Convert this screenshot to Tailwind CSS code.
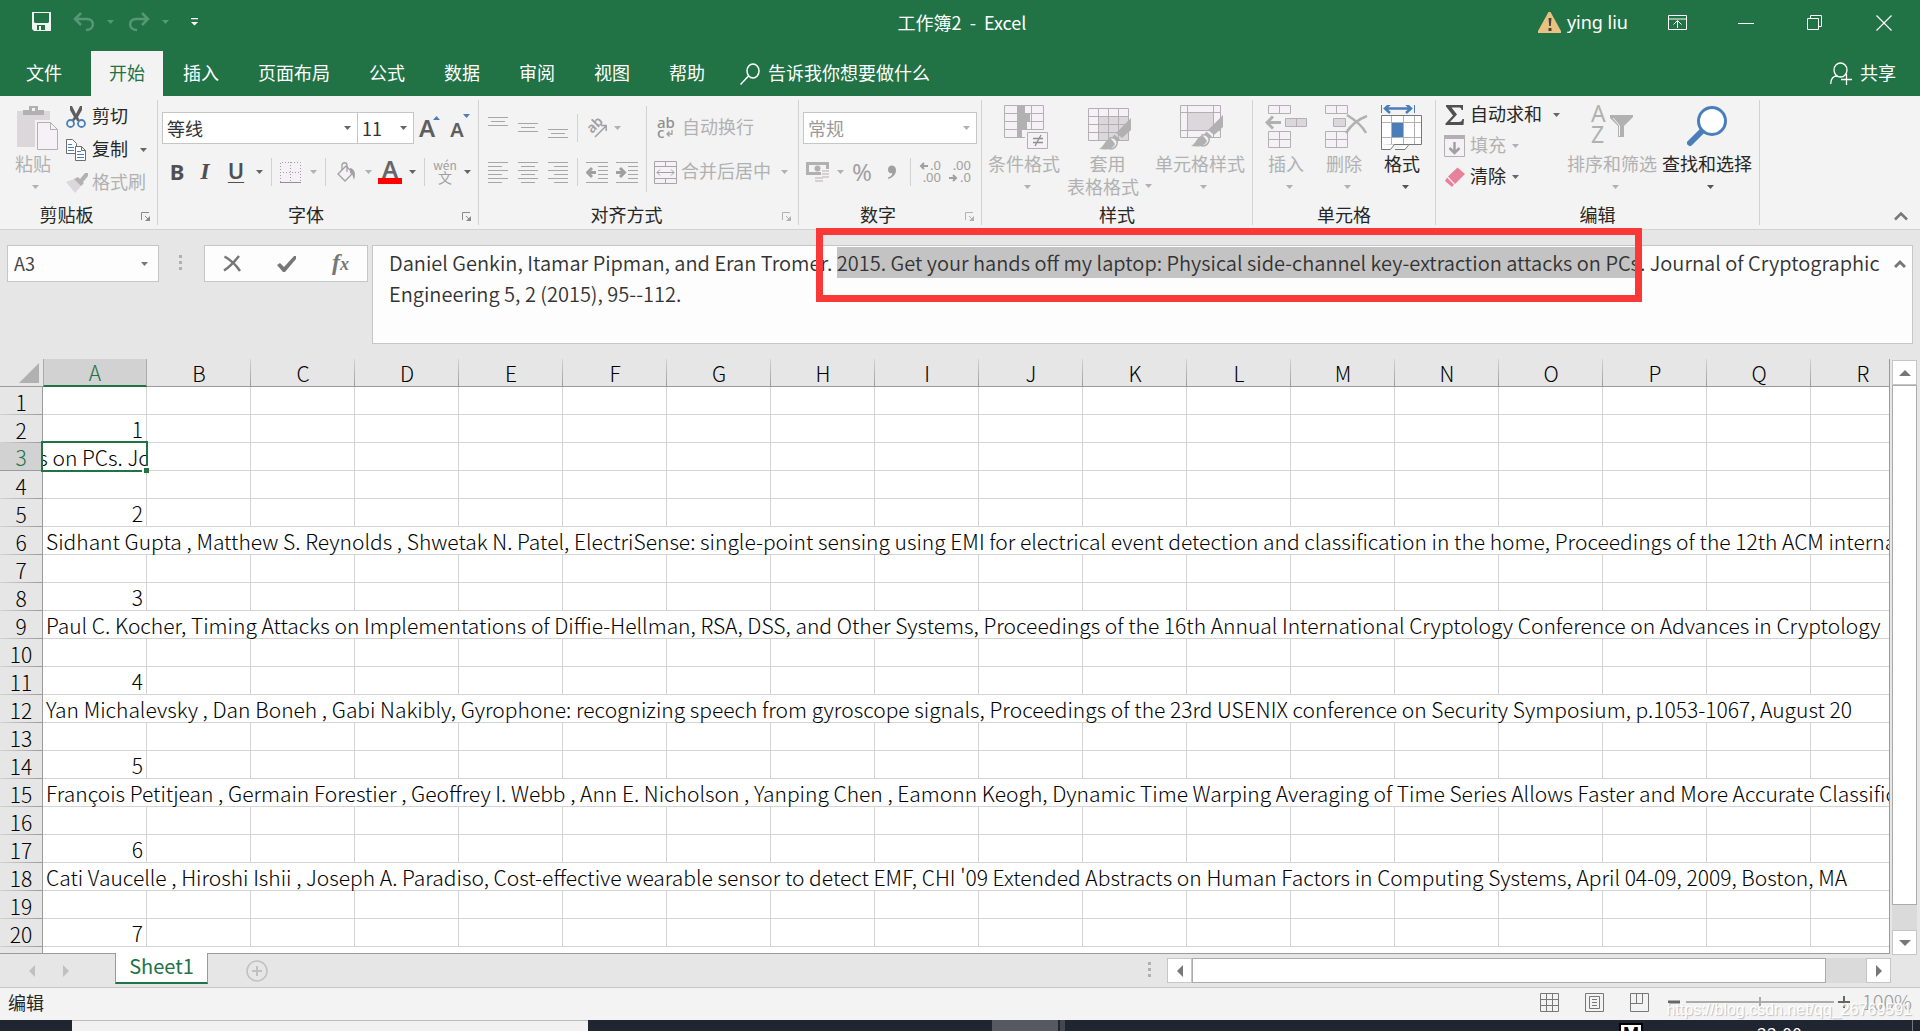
<!DOCTYPE html>
<html lang="zh-CN">
<head>
<meta charset="utf-8">
<meta name="viewport" content="width=device-width, initial-scale=1">
<title>工作簿2 - Excel</title>
<script src="https://cdn.jsdelivr.net/npm/@tailwindcss/browser@4"></script>
</head>
<body class="flex h-screen flex-col overflow-hidden bg-[#e6e6e6] font-['Noto_Sans_CJK_SC',sans-serif] text-lg leading-6 text-[#262626]">

<svg class="hidden">
  <symbol id="down" viewBox="0 0 7 4"><path fill="currentColor" d="M0 0h7L3.500 4z"/></symbol>
  <symbol id="launch" viewBox="0 0 9 9"><path fill="none" stroke="currentColor" d="M.5 8V.5H8M4 4l4 4"/><path fill="currentColor" d="M9 4v5H4z"/></symbol>
  <symbol id="brush" viewBox="0 0 33 33"><path fill="#b1b1b1" d="M32 1v12L23 21l-6-5zM15.500 17.500l5.500 5-3 2.500-5-4.500z"/><path fill="#f3f3f3" stroke="#b1b1b1" stroke-width="1.500" d="M11 21c4-1 8 2 7 6-1 3-4 5-7 5z"/><path fill="#b1b1b1" d="M0 32c5-2 6-10 11-10 2 0 3 2 5 5-3 6-9 6-16 5z"/></symbol>
</svg>

<!-- Title bar -->
<header class="flex h-[51px] shrink-0 items-center bg-[#217346] pb-3 text-white">
  <div class="flex flex-1 items-center pt-1 pl-8">
    <button aria-label="保存"><svg class="h-[19px] w-[19px]" viewBox="0 0 19 19"><path fill="#f3f3f3" fill-rule="evenodd" d="M0 0h19v19H2l-2-2zM2 1v9l1 1h13l1-1V1zM5 13v5h8v-5z"/><path fill="#f3f3f3" d="M7 14h2v4H7z"/></svg></button>
    <button aria-label="撤消" class="ml-[22px] flex items-center gap-3 text-[#579776]"><svg class="h-5 w-[22px]" viewBox="0 0 22 20"><path fill="none" stroke="currentColor" stroke-width="2.500" d="M8 1L2 7l6 6M2 7h12c8 0 8 11-1 11"/></svg><svg class="h-1 w-[7px]"><use href="#down"/></svg></button>
    <button aria-label="恢复" class="ml-3.5 flex items-center gap-3 text-[#579776]"><svg class="h-5 w-[22px]" viewBox="0 0 22 20"><path fill="none" stroke="currentColor" stroke-width="2.500" d="M14 1l6 6-6 6M20 7H8c-8 0-8 11 1 11"/></svg><svg class="h-1 w-[7px]"><use href="#down"/></svg></button>
    <button aria-label="自定义快速访问工具栏" class="ml-[22px]"><svg class="h-2 w-[7px]" viewBox="0 0 7 8"><path fill="#fff" d="M0 0h7v1.300H0zM0 4h7L3.500 7.500z"/></svg></button>
  </div>
  <h1 class="pt-1 text-center text-lg leading-6 whitespace-pre">工作簿2  -  Excel</h1>
  <div class="flex flex-1 items-center justify-end pt-1.5 pr-7">
    <button class="flex items-center gap-1.5 font-['Noto_Sans',sans-serif]"><svg class="h-[21px] w-[23px]" viewBox="0 0 23 21"><path fill="#e9c282" d="M10.500 0h2L23 19v2H0v-2z"/><path fill="#444" d="M10.500 6h3l-.7 8h-1.600zM10.500 16h3v3h-3z"/></svg><span class="pb-0.5">ying liu</span></button>
    <button aria-label="功能区显示选项" class="ml-10"><svg class="h-4 w-5" viewBox="0 0 20 16"><path fill="none" stroke="#fff" d="M.5.500h18v14H.5zM.5 4h18M9.500 13V6M5.500 9.500l4-4 4 4"/></svg></button>
    <button aria-label="最小化" class="ml-[50px]"><svg class="h-4 w-4"><path stroke="#fff" d="M0 8.500h16"/></svg></button>
    <button aria-label="还原" class="ml-[53px]"><svg class="h-4 w-4"><path fill="none" stroke="#fff" d="M.5 3.500h11v11H.5zM3.500 3V.500h11v11H12"/></svg></button>
    <button aria-label="关闭" class="ml-[53px]"><svg class="h-4 w-4"><path stroke="#fff" stroke-width="1.200" d="M.5.500l15 15M15.500.500l-15 15"/></svg></button>
  </div>
</header>

<!-- Ribbon tabs -->
<nav class="flex h-[45px] shrink-0 items-stretch gap-px bg-[#217346] pl-2 text-white">
  <button class="mr-2.5 px-[18px] pb-1">文件</button>
  <button class="bg-[#f3f3f3] px-[18px] pb-1 text-[#217346]">开始</button>
  <button class="px-[19px] pb-1">插入</button>
  <button class="px-[19px] pb-1">页面布局</button>
  <button class="px-[19px] pb-1">公式</button>
  <button class="px-[19px] pb-1">数据</button>
  <button class="px-[19px] pb-1">审阅</button>
  <button class="px-[19px] pb-1">视图</button>
  <button class="px-[19px] pb-1">帮助</button>
  <button class="flex items-center gap-2 pl-[15px]"><svg class="h-[22px] w-5" viewBox="0 0 20 22"><path fill="none" stroke="#fff" stroke-width="1.500" d="M8.500 13L.5 21.500M7 8a6 7 0 1 0 12 0a6 7 0 1 0-12 0z"/></svg><span class="pb-1">告诉我你想要做什么</span></button>
  <button class="ml-auto flex items-center gap-2 pr-6"><svg class="h-[23px] w-[22px]" viewBox="0 0 22 23"><path fill="none" stroke="#fff" stroke-width="1.300" d="M4 8a6.500 7 0 1 0 13 0a6.500 7 0 1 0-13 0zM.7 22c0-5 3-8 7-8.500M11 17.500h11M16.500 12v11"/></svg><span class="pb-1">共享</span></button>
</nav>

<!-- Ribbon -->
<section class="flex h-[134px] shrink-0 items-start border-b border-[#d2d2d2] bg-[#f3f3f3] pt-1">

  <!-- Clipboard -->
  <div class="flex h-[125px] w-[158px] shrink-0 flex-col border-r border-[#d2d2d2]">
    <div class="flex h-[102px] shrink-0">
      <button class="ml-1.5 flex w-[54px] flex-col items-center pt-[5px] text-[#b1b1b1]">
        <svg class="ml-2.5 h-[46px] w-[42px] shrink-0" viewBox="0 0 42 46"><path fill="#dcd7db" d="M0 6h33v36H0z"/><path fill="#b1b1b1" d="M6 5h6V1h9v4h6v5H6z"/><path fill="#f3f3f3" d="M15 3h3v3h-3zM18 15h24v31H18z"/><path fill="#f5f1f6" stroke="#b1b1b1" d="M20.500 17.500h13l7 7v20h-20zM33.500 17.500v7h7"/></svg>
        <span>粘贴</span>
        <svg class="mt-2.5 ml-1 h-1 w-[7px]"><use href="#down"/></svg>
      </button>
      <div class="ml-0.5 flex flex-col">
        <button class="flex h-[33px] items-center gap-1.5 pl-1"><svg class="h-[22px] w-5" viewBox="0 0 20 22"><path fill="#5e5e5e" d="M4 0l2 0 4 8 4-8h2v4l-4 7 2 4h-3l-1-2-2 2H5l3-4-4-7z"/><path fill="none" stroke="#4a7ebb" stroke-width="1.800" d="M1 17.500a3.500 3.500 0 1 0 7 0a3.500 3.500 0 1 0-7 0zM12 17.500a3.500 3.500 0 1 0 7 0a3.500 3.500 0 1 0-7 0z"/></svg><span class="pb-1">剪切</span></button>
        <button class="flex h-[33px] items-center gap-1.5 pl-1"><svg class="h-[22px] w-5" viewBox="0 0 20 22"><path fill="#fff" stroke="#6d6d6d" d="M.5.500h6l4 4v10H.5z"/><path stroke="#4a7ebb" d="M2 5.500h4M2 8.500h6M2 11.500h6"/><path fill="#fff" stroke="#6d6d6d" d="M9.500 7.500h6l4 4v10h-10zM15.500 7.500v4h4"/><path stroke="#4a7ebb" d="M11 12.500h4M11 15.500h7M11 18.500h7"/></svg><span class="pb-1">复制</span><svg class="ml-1.5 h-1 w-[7px] text-[#666]"><use href="#down"/></svg></button>
        <button class="flex h-[33px] items-center gap-1 pl-1 text-[#b1b1b1]"><svg class="h-5 w-[22px]" viewBox="0 0 22 20"><path fill="#dcd7db" d="M0 9l8-3 7 7-6 7z"/><path fill="#b1b1b1" d="M8 6l4-2 6 6-3 3zM14 6l5-6h3v3l-5 6z"/></svg><span class="pb-1">格式刷</span></button>
      </div>
    </div>
    <div class="flex items-center"><span class="flex-1 pr-2 text-center">剪贴板</span><button aria-label="剪贴板设置" class="mt-1 mr-[7px] text-[#8a8a8a]"><svg class="h-[9px] w-[9px]"><use href="#launch"/></svg></button></div>
  </div>

  <!-- Font -->
  <div class="flex h-[125px] w-[321px] shrink-0 flex-col border-r border-[#d2d2d2]">
    <div class="flex h-[102px] shrink-0 flex-col pt-3 pl-1">
      <div class="flex h-8 shrink-0 items-center">
        <div class="flex h-8 w-[196px] items-center border border-[#c6c6c6] bg-white pr-1.5 text-[#666]"><select aria-label="字体" class="flex-1 appearance-none bg-transparent pl-1 text-[#333] outline-none"><option>等线</option></select><svg class="h-1 w-[7px]"><use href="#down"/></svg></div>
        <div class="flex h-8 w-14 items-center border-y border-r border-[#c6c6c6] bg-white pr-1.5 text-[#666]"><select aria-label="字号" class="w-0 flex-1 appearance-none bg-transparent pl-1 text-[#333] outline-none"><option>11</option></select><svg class="h-1 w-[7px]"><use href="#down"/></svg></div>
        <button aria-label="增大字号" class="ml-[5px] flex items-start font-['Noto_Sans',sans-serif] text-2xl leading-6 font-semibold text-[#5e5e5e]">A<svg class="-ml-0.5 h-1 w-[7px]" viewBox="0 0 7 4"><path fill="#4a7ebb" d="M0 4h7L3.500 0z"/></svg></button>
        <button aria-label="减小字号" class="ml-2.5 flex items-start font-['Noto_Sans',sans-serif] text-xl leading-6 font-semibold text-[#5e5e5e]"><span class="pt-1">A</span><svg class="-ml-px h-1 w-[7px] text-[#4a7ebb]"><use href="#down"/></svg></button>
      </div>
      <div class="flex h-14 shrink-0 items-center font-['Noto_Sans',sans-serif] text-[22px] text-[#505050]">
        <button aria-label="加粗" class="w-[30px] pb-0.5 text-center font-bold">B</button>
        <button aria-label="倾斜" class="w-[26px] pb-0.5 text-center font-['Liberation_Serif',serif] text-2xl font-bold italic">I</button>
        <button aria-label="下划线" class="ml-1 flex w-7 justify-center pb-1 font-semibold underline decoration-1 underline-offset-3">U</button>
        <svg class="ml-1.5 h-1 w-[7px] text-[#666]"><use href="#down"/></svg>
        <i class="ml-2 h-7 w-px bg-[#d2d2d2]"></i>
        <button aria-label="边框" class="ml-2 flex items-center gap-[9px] text-[#b1b1b1]"><svg class="h-[21px] w-[21px]"><path fill="#f5f1f6" d="M0 0h21v21H0z"/><path fill="none" stroke="#a0a0a0" stroke-dasharray="1 2" d="M.5 20V.500h20V20M10.500 0v20M0 10.500h21"/><path stroke="#8f8f8f" d="M0 20.500h21"/></svg><svg class="h-1 w-[7px]"><use href="#down"/></svg></button>
        <i class="ml-2 h-7 w-px bg-[#d2d2d2]"></i>
        <button aria-label="填充颜色" class="ml-[11px] flex items-center gap-[9px] text-[#b1b1b1]"><svg class="h-[21px] w-[19px]" viewBox="0 0 19 21"><path fill="#f5f1f6" stroke="#a0a0a0" stroke-width="1.300" d="M1 12L9 4l7 7-8 8z"/><path fill="none" stroke="#a0a0a0" stroke-width="1.300" d="M5 8V3c0-3 5-3 5 0v7"/><path fill="#a0a0a0" d="M13 6c5 1 6 6 4 12-1-3-1-6-4-7z"/></svg><svg class="h-1 w-[7px]"><use href="#down"/></svg></button>
        <button aria-label="字体颜色" class="ml-1.5 flex w-6 flex-col items-center border-b-6 border-[#f00] text-2xl leading-[18px] font-semibold text-[#666]">A</button>
        <svg class="ml-[7px] h-1 w-[7px] text-[#666]"><use href="#down"/></svg>
        <i class="ml-2 h-7 w-px bg-[#d2d2d2]"></i>
        <button aria-label="拼音指南" class="ml-2 flex w-6 flex-col items-center font-['Noto_Sans_CJK_SC',sans-serif] text-[#a0a0a0]"><span class="text-xs leading-[10px]">wén</span><span class="text-sm leading-[14px]">文</span></button>
        <svg class="ml-[7px] h-1 w-[7px] text-[#666]"><use href="#down"/></svg>
      </div>
    </div>
    <div class="flex items-center"><span class="flex-1 pr-2 text-center">字体</span><button aria-label="字体设置" class="mt-1 mr-[7px] text-[#8a8a8a]"><svg class="h-[9px] w-[9px]"><use href="#launch"/></svg></button></div>
  </div>

  <!-- Alignment -->
  <div class="flex h-[125px] w-[320px] shrink-0 flex-col border-r border-[#d2d2d2]">
    <div class="flex h-[102px] shrink-0 pl-[9px] text-[#b1b1b1]">
      <div class="flex w-[158px] flex-col">
        <div class="mt-3 flex h-8 items-center">
          <button aria-label="顶端对齐"><svg class="h-[22px] w-5"><path stroke="#a6a6a6" d="M0 .500h20M3 4.500h14M0 8.500h20"/></svg></button>
          <button aria-label="垂直居中" class="ml-2.5"><svg class="h-[22px] w-5"><path stroke="#a6a6a6" d="M0 6.500h20M3 10.500h14M0 14.500h20"/></svg></button>
          <button aria-label="底端对齐" class="ml-2.5"><svg class="h-[22px] w-5"><path stroke="#a6a6a6" d="M0 12.500h20M3 16.500h14M0 20.500h20"/></svg></button>
          <i class="ml-[9px] h-7 w-px bg-[#d2d2d2]"></i>
          <button aria-label="方向" class="ml-[9px] flex items-center gap-[7px]"><svg class="h-5 w-5 overflow-visible" viewBox="0 0 20 20"><text transform="translate(5 16) rotate(-45)" font-family="Noto Sans" font-size="14" font-weight="600" fill="#a0a0a0">ab</text><path fill="none" stroke="#a0a0a0" stroke-width="1.500" d="M8 19L19 8M14 7.500h5.200V13"/></svg><svg class="h-1 w-[7px]"><use href="#down"/></svg></button>
        </div>
        <div class="mt-3 flex h-8 items-center">
          <button aria-label="左对齐"><svg class="h-[21px] w-5"><path stroke="#a6a6a6" d="M0 .500h20M0 4.500h14M0 8.500h20M0 12.500h14M0 16.500h20M0 20.500h14"/></svg></button>
          <button aria-label="居中" class="ml-2.5"><svg class="h-[21px] w-5"><path stroke="#a6a6a6" d="M0 .500h20M3 4.500h14M0 8.500h20M3 12.500h14M0 16.500h20M3 20.500h14"/></svg></button>
          <button aria-label="右对齐" class="ml-2.5"><svg class="h-[21px] w-5"><path stroke="#a6a6a6" d="M0 .500h20M6 4.500h14M0 8.500h20M6 12.500h14M0 16.500h20M6 20.500h14"/></svg></button>
          <i class="ml-[9px] h-7 w-px bg-[#d2d2d2]"></i>
          <button aria-label="减少缩进" class="ml-2"><svg class="h-[21px] w-[22px]"><path stroke="#a6a6a6" d="M0 .500h22M12 4.500h10M12 8.500h10M12 12.500h10M12 16.500h10M0 20.500h22"/><path fill="none" stroke="#a0a0a0" stroke-width="3" d="M6 6l-4.500 4.500L6 15M2 10.500h8"/></svg></button>
          <button aria-label="增加缩进" class="ml-2"><svg class="h-[21px] w-[22px]"><path stroke="#a6a6a6" d="M0 .500h22M12 4.500h10M12 8.500h10M12 12.500h10M12 16.500h10M0 20.500h22"/><path fill="none" stroke="#a0a0a0" stroke-width="3" d="M4 6l4.500 4.500L4 15M0 10.500h8"/></svg></button>
        </div>
      </div>
      <div class="mt-1.5 h-[86px] w-px bg-[#d2d2d2]"></div>
      <div class="flex flex-col pl-[7px]">
        <button class="mt-3 flex h-8 items-center gap-1"><svg class="h-[22px] w-6 overflow-visible" viewBox="0 0 24 22"><g font-family="Noto Sans" font-size="15" font-weight="500" fill="#8f8f8f"><text x="3" y="11">ab</text><text x="3" y="21">c</text></g><path fill="none" stroke="#a0a0a0" stroke-width="1.300" d="M18 13v4h-5M15.500 14.500L13 17l2.500 2.500"/></svg><span class="pb-1">自动换行</span></button>
        <button class="mt-3 flex h-8 items-center gap-1"><svg class="h-[23px] w-[23px]"><path fill="#f5f1f6" stroke="#a6a6a6" d="M.5.500h22v22H.5zM0 5.500h23M0 17.500h23M11.500 0v5M11.500 18v5"/><path fill="none" stroke="#a0a0a0" d="M3 11.500h17M6 8.500l-3 3 3 3M17 8.500l3 3-3 3"/></svg><span class="pb-1">合并后居中</span><svg class="ml-1.5 h-1 w-[7px]"><use href="#down"/></svg></button>
      </div>
    </div>
    <div class="flex items-center"><span class="flex-1 pr-2 text-center">对齐方式</span><button aria-label="对齐设置" class="mt-1 mr-[7px] text-[#b1b1b1]"><svg class="h-[9px] w-[9px]"><use href="#launch"/></svg></button></div>
  </div>

  <!-- Number -->
  <div class="flex h-[125px] w-[183px] shrink-0 flex-col border-r border-[#d2d2d2]">
    <div class="flex h-[102px] shrink-0 flex-col pt-3 pl-1 text-[#b1b1b1]">
      <div class="flex h-8 w-[174px] items-center border border-[#c6c6c6] bg-white pr-1.5"><select aria-label="数字格式" class="flex-1 appearance-none bg-transparent pl-1 text-[#9a9a9a] outline-none"><option>常规</option></select><svg class="h-1 w-[7px]"><use href="#down"/></svg></div>
      <div class="mt-3 flex h-8 items-center">
        <button aria-label="会计数字格式" class="ml-[3px] flex items-center gap-[7px]"><svg class="h-6 w-6" viewBox="0 0 24 24"><path fill="#b1b1b1" fill-rule="evenodd" d="M0 2h23v13H0zM3 5v7h17V5z"/><circle cx="11.500" cy="8.500" r="3" fill="#b1b1b1"/><path fill="#f3f3f3" d="M15 9h9v10h-6v5H8v-8h7z"/><path stroke="#d5d0d4" stroke-width="2" d="M16 11h7M16 14h7M16 17h7M9 18h8M9 21h8"/></svg><svg class="h-1 w-[7px]"><use href="#down"/></svg></button>
        <button aria-label="百分比样式" class="ml-2 font-['Noto_Sans',sans-serif] text-2xl text-[#a0a0a0]">%</button>
        <button aria-label="千位分隔样式" class="ml-[15px]"><svg class="h-[15px] w-[9px]" viewBox="0 0 9 15"><path fill="#a0a0a0" d="M1 4.500C1-1 9-1 9 5c0 5-4 8-8 9v-1.500c3-1 4-2 4.500-4.500C3 9 1 7.500 1 4.500z"/></svg></button>
        <i class="ml-3.5 h-7 w-px bg-[#d2d2d2]"></i>
        <button aria-label="增加小数位数" class="ml-2"><svg class="h-6 w-[22px] overflow-visible"><g font-family="Noto Sans" font-size="13" fill="#a0a0a0" text-anchor="end"><text x="22" y="10">.0</text><text x="22" y="22">.00</text></g><path fill="none" stroke="#a0a0a0" stroke-width="2" d="M9 6H2M5 3L2 6l3 3"/></svg></button>
        <button aria-label="减少小数位数" class="ml-2"><svg class="h-6 w-[22px] overflow-visible"><g font-family="Noto Sans" font-size="13" fill="#a0a0a0" text-anchor="end"><text x="22" y="10">.00</text><text x="22" y="22">.0</text></g><path fill="none" stroke="#a0a0a0" stroke-width="2" d="M0 18h7M4 15l3 3-3 3"/></svg></button>
      </div>
    </div>
    <div class="flex items-center"><span class="flex-1 pr-2 text-center">数字</span><button aria-label="数字设置" class="mt-1 mr-[7px] text-[#b1b1b1]"><svg class="h-[9px] w-[9px]"><use href="#launch"/></svg></button></div>
  </div>

  <!-- Styles -->
  <div class="flex h-[125px] w-[271px] shrink-0 flex-col border-r border-[#d2d2d2]">
    <div class="flex h-[102px] shrink-0 pl-[5px] text-[#b1b1b1]">
      <button class="flex w-[74px] flex-col items-center pt-[5px]">
        <svg class="ml-1 h-[46px] w-11 shrink-0"><path fill="#f5f1f6" stroke="#b1b1b1" d="M.5.500h39v32H.5zM0 8.500h39M0 16.500h39M0 24.500h39M27.500 0v32"/><path fill="#b1b1b1" d="M13 0h8v8h5v8h-3v8h-5v8h-5z"/><path fill="#f3f3f3" d="M21 25h23v21H21z"/><path fill="#f5f1f6" stroke="#b1b1b1" d="M23.500 27.500h20v16h-20z"/><path fill="none" stroke="#8f8f8f" stroke-width="1.300" d="M29 33.500h10M29 37.500h10M37 30l-6 11"/></svg>
        <span>条件格式</span><svg class="mt-2.5 ml-1.5 h-1 w-[7px]"><use href="#down"/></svg>
      </button>
      <button class="flex w-[93px] flex-col items-center pt-[5px]">
        <svg class="ml-1 h-[46px] w-11 shrink-0"><path fill="#f5f1f6" d="M0 3h40v33H0z"/><path fill="#dcd7db" d="M10 12h30v24H10z"/><path fill="none" stroke="#b1b1b1" d="M.5 3.500h40v32H.5zM0 11.500h40M0 19.500h40M0 27.500h40M10.500 3v32M20.500 3v32M30.500 3v32"/><svg x="11" y="12" width="33" height="33"><use href="#brush"/></svg></svg>
        <span>套用</span><span class="-mt-px flex items-center gap-1.5 pl-1">表格格式<svg class="h-1 w-[7px]"><use href="#down"/></svg></span>
      </button>
      <button class="flex w-[92px] flex-col items-center pt-[5px]">
        <svg class="ml-1 h-[46px] w-11 shrink-0"><path fill="#f5f1f6" stroke="#b1b1b1" d="M.5.500h40v32H.5z"/><path fill="#dcd7db" d="M8 8h26v18H8z"/><path fill="none" stroke="#b1b1b1" d="M7.500 0v32M33.500 0v32M0 7.500h40M0 25.500h40"/><svg x="11" y="9" width="33" height="33"><use href="#brush"/></svg></svg>
        <span>单元格样式</span><svg class="mt-2.5 ml-1.5 h-1 w-[7px]"><use href="#down"/></svg>
      </button>
    </div>
    <div class="text-center">样式</div>
  </div>

  <!-- Cells -->
  <div class="flex h-[125px] w-[183px] shrink-0 flex-col border-r border-[#d2d2d2]">
    <div class="flex h-[102px] shrink-0 pl-1 text-[#b1b1b1]">
      <button class="flex w-[58px] flex-col items-center pt-[5px]">
        <svg class="h-[46px] w-[42px] shrink-0"><path fill="#f5f1f6" stroke="#b1b1b1" d="M3.500.500h22v8h-22zM14.500 0v8M3.500 26.500h22v16h-22zM14.500 26v16M3 34.500h22"/><path fill="#dcd7db" stroke="#b1b1b1" d="M20.500 13.500h21v8h-21zM31.500 13v8"/><path fill="none" stroke="#b1b1b1" stroke-width="3" d="M8 11.500L2 17.500l6 6M2 17.500h14"/></svg>
        <span>插入</span><svg class="mt-2.5 ml-1.5 h-1 w-[7px]"><use href="#down"/></svg>
      </button>
      <button class="flex w-[58px] flex-col items-center pt-[5px]">
        <svg class="ml-1 h-[46px] w-[43px] shrink-0"><path fill="#f5f1f6" stroke="#b1b1b1" d="M.5.500h22v8h-22zM11.500 0v8M.5 26.500h22v16h-22zM11.500 26v16M0 34.500h22"/><path fill="#dcd7db" stroke="#b1b1b1" d="M8.500 13.500h12v8h-12z"/><path fill="none" stroke="#b1b1b1" stroke-width="2.500" d="M22 10c8 5 15 10 19 18M42 11c-8 3-16 9-21 17"/></svg>
        <span>删除</span><svg class="mt-2.5 ml-1.5 h-1 w-[7px]"><use href="#down"/></svg>
      </button>
      <button class="flex w-[58px] flex-col items-center pt-[5px] text-[#262626]">
        <svg class="h-[46px] w-[42px] shrink-0"><path fill="none" stroke="#4a7ebb" d="M.5 0v8M33.500 0v8"/><path fill="none" stroke="#4a7ebb" stroke-width="2.500" d="M4 3.500h26M9-1L4 3.500 9 8M25-1l5 4.500L25 8"/><path fill="#fff" stroke="#777" d="M.5 10.500h40v29H.5z"/><path fill="none" stroke="#b1b1b1" d="M10.500 11v28M22.500 11v28M33.500 11v28M1 17.500h39M1 32.500h39"/><path fill="#4a7ebb" d="M11 18h11v14H11z"/><path fill="#fff" stroke="#777" d="M.5 39v5.500h9l4-5M14 44.500h10l4-5"/></svg>
        <span>格式</span><svg class="mt-2.5 ml-1.5 h-1 w-[7px] text-[#555]"><use href="#down"/></svg>
      </button>
    </div>
    <div class="text-center">单元格</div>
  </div>

  <!-- Editing -->
  <div class="flex h-[125px] w-[324px] shrink-0 flex-col border-r border-[#d2d2d2]">
    <div class="flex h-[102px] shrink-0 pl-2">
      <div class="flex w-[120px] flex-col">
        <button class="flex h-[30px] items-center gap-[5px]"><svg class="h-5 w-[21px]" viewBox="0 0 21 20"><path fill="#505050" d="M2 0h17v5h-1.500c0-2-1-2.500-3-2.500H7.500L13 9.500l-7 7.500h9c2 0 3-1 3.500-3H20l-.5 6H1.500v-1.500L9 10.500 2 1.500z"/></svg><span class="pb-1">自动求和</span><svg class="ml-1.5 h-1 w-[7px] text-[#666]"><use href="#down"/></svg></button>
        <button class="flex h-[31px] items-center gap-[5px] text-[#b1b1b1]"><svg class="h-[22px] w-[21px]"><path fill="#f5f1f6" stroke="#b1b1b1" d="M.5.500h20v21H.5z"/><path fill="#b1b1b1" d="M0 0h21v4H0z"/><path fill="none" stroke="#a0a0a0" stroke-width="2.500" d="M10.500 7v11M5.500 13l5 5 5-5"/></svg><span class="pb-1">填充</span><svg class="ml-px h-1 w-[7px]"><use href="#down"/></svg></button>
        <button class="flex h-[31px] items-center gap-[5px]"><svg class="h-5 w-[21px]" viewBox="0 0 21 20"><path fill="#e8829a" d="M13.500.500L21 7 11 17 4 9.500zM3 10.500l7 7L8 20 1 14z"/></svg><span class="pb-1">清除</span><svg class="ml-px h-1 w-[7px] text-[#666]"><use href="#down"/></svg></button>
      </div>
      <button class="flex w-[96px] flex-col items-center pt-[5px] text-[#b1b1b1]">
        <svg class="h-[46px] w-[42px] shrink-0 overflow-visible"><g font-family="Noto Sans" font-size="23" fill="#b1b1b1"><text x="0" y="17">A</text><text x="0" y="38">Z</text></g><path fill="#b1b1b1" d="M19 10h23v2l-9 9v11h-6V21l-8-8z"/><path fill="none" stroke="#f3f3f3" d="M22 13l6.500 7.500V31"/></svg>
        <span>排序和筛选</span><svg class="mt-2.5 ml-1.5 h-1 w-[7px]"><use href="#down"/></svg>
      </button>
      <button class="flex w-[94px] flex-col items-center pt-[5px]">
        <svg class="h-[46px] w-10 shrink-0"><path stroke="#4a7ebb" stroke-width="6" stroke-linecap="round" d="M3 38l13-13"/><circle cx="25" cy="16" r="13.500" fill="#fff" stroke="#4a7ebb" stroke-width="3"/></svg>
        <span>查找和选择</span><svg class="mt-2.5 ml-1.5 h-1 w-[7px] text-[#555]"><use href="#down"/></svg>
      </button>
    </div>
    <div class="text-center">编辑</div>
  </div>
  <button aria-label="折叠功能区" class="mr-3 mb-2 ml-auto self-end"><svg class="h-2.5 w-3.5"><path fill="none" stroke="#777" stroke-width="2.500" d="M1 8.500l6-6 6 6"/></svg></button>
</section>

<!-- Formula bar -->
<section class="flex h-[129px] shrink-0 items-start pt-[15px] pr-[7px] pl-[7px] text-[#444]">
  <div class="flex h-[37px] w-[152px] shrink-0 items-center border border-[#c6c6c6] bg-[#fdfdfd] pr-2.5"><input aria-label="名称框" value="A3" class="w-0 flex-1 bg-transparent pb-0.5 pl-1.5 font-['Noto_Sans_CJK_SC',sans-serif] outline-none"><svg class="h-1 w-[7px] text-[#777]"><use href="#down"/></svg></div>
  <svg class="mt-2.5 ml-5 h-4 w-[3px] shrink-0"><path fill="#b1b1b1" d="M0 0h3v3H0zM0 6h3v3H0zM0 12h3v3H0z"/></svg>
  <div class="ml-[22px] flex h-[37px] w-[164px] shrink-0 items-center justify-between border border-[#c6c6c6] bg-[#fdfdfd] px-[18px]">
    <button aria-label="取消"><svg class="h-[17px] w-[18px]"><path fill="none" stroke="#777" stroke-width="2.500" d="M1 15.500C5 13 12 6 16 1M1.500 1.500C6 4 13 10 17 16"/></svg></button>
    <button aria-label="输入"><svg class="h-4 w-[19px]"><path fill="#777" d="M0 9l3-2 4 4L17 0h2v3L8 16H6z"/></svg></button>
    <button aria-label="插入函数" class="pb-1 font-['Liberation_Serif',serif] text-2xl font-bold text-[#777] italic">f<span class="text-lg">x</span></button>
  </div>
  <div class="relative ml-1 h-[99px] flex-1 border border-[#c6c6c6] bg-[#fdfdfd] pr-7 pl-4">
    <div role="textbox" aria-label="编辑栏" contenteditable="true" class="py-px text-[20px] leading-[31px] font-[350] text-[#333] outline-none">Daniel Genkin, Itamar Pipman, and Eran Tromer. <mark class="bg-[#c3c3c3] py-px text-inherit">2015. Get your hands off my laptop: Physical side-channel key-extraction attacks on PCs</mark>. Journal of Cryptographic Engineering 5, 2 (2015), 95--112.</div>
    <button aria-label="折叠编辑栏" class="absolute top-[13px] right-[6px]"><svg class="h-2.5 w-3"><path fill="none" stroke="#777" stroke-width="3" d="M1 8l5-5 5 5"/></svg></button>
    <div class="pointer-events-none absolute -top-[18px] left-[443px] h-[74px] w-[826px] border-[7px] border-[#fb3838]"></div>
  </div>
</section>

<!-- Worksheet -->
<main class="flex min-h-0 flex-1 text-[21px] leading-[25px] text-black">
  <div class="min-w-0 flex-1 overflow-hidden border-r border-b border-[#9b9b9b] bg-white">
    <table class="w-[1915px] table-fixed border-separate border-spacing-0 font-light">
      <thead><tr id="cols" class="h-7"></tr></thead>
      <tbody id="rows"></tbody>
      <tfoot><tr class="h-7"><th class="border-r border-[#9b9b9b] bg-[#e6e6e6]"></th><td colspan="18"></td></tr></tfoot>
    </table>
  </div>
  <div class="-mb-px flex w-[30px] shrink-0 flex-col pr-[3px] pl-[2px]">
    <button aria-label="向上滚动" class="mt-px flex h-[25px] items-center justify-center border border-[#c6c6c6] bg-white"><svg class="h-1.5 w-3"><path fill="#777" d="M0 6h12L6 0z"/></svg></button>
    <div class="flex flex-1 flex-col bg-[#dadada]"><div class="h-[520px] border border-[#ababab] bg-white"></div></div>
    <button aria-label="向下滚动" class="flex h-[25px] shrink-0 items-center justify-center border border-[#c6c6c6] bg-white"><svg class="h-1.5 w-3"><path fill="#777" d="M0 0h12L6 6z"/></svg></button>
  </div>
</main>

<!-- Sheet tabs -->
<section class="flex h-[33px] shrink-0 items-start pr-[29px]">
  <button aria-label="上一个工作表" class="mt-[11px] ml-[29px]"><svg class="h-3 w-1.5"><path fill="#c0c0c0" d="M6 0v12L0 6z"/></svg></button>
  <button aria-label="下一个工作表" class="mt-[11px] ml-7"><svg class="h-3 w-1.5"><path fill="#c0c0c0" d="M0 0v12l6-6z"/></svg></button>
  <button class="-mt-px ml-[46px] h-[31px] w-[93px] border-x border-b-2 border-x-[#9b9b9b] border-b-[#217346] bg-white pb-1 text-xl leading-6 text-[#217346]">Sheet1</button>
  <button aria-label="新工作表" class="mt-1.5 ml-[38px]"><svg class="h-[22px] w-[22px]"><circle cx="11" cy="11" r="10" fill="none" stroke="#c0c0c0" stroke-width="1.500"/><path stroke="#c0c0c0" stroke-width="2" d="M6 11h10M11 6v10"/></svg></button>
  <svg class="mt-2 ml-auto h-4 w-[3px]"><path fill="#b1b1b1" d="M0 0h3v3H0zM0 6h3v3H0zM0 12h3v3H0z"/></svg>
  <div class="mt-1 ml-4 flex h-[25px] w-[724px]">
    <button aria-label="向左滚动" class="flex w-[25px] items-center justify-center border border-[#c6c6c6] bg-white"><svg class="h-3 w-1.5"><path fill="#777" d="M6 0v12L0 6z"/></svg></button>
    <div class="flex flex-1 bg-[#dadada]"><div class="w-[634px] border border-[#ababab] bg-white"></div></div>
    <button aria-label="向右滚动" class="flex w-[25px] items-center justify-center border border-[#c6c6c6] bg-white"><svg class="h-3 w-1.5"><path fill="#777" d="M0 0v12l6-6z"/></svg></button>
  </div>
</section>

<!-- Status bar -->
<footer class="relative flex h-[33px] shrink-0 items-center border-t border-[#c6c6c6] bg-[#f3f3f3] px-2 pb-1">
  <span>编辑</span>
  <button aria-label="普通" class="ml-auto"><svg class="h-[19px] w-5"><path fill="none" stroke="#777" d="M.5.500h18v18H.5zM6.500 0v19M12.500 0v19M0 6.500h19M0 12.500h19"/></svg></button>
  <button aria-label="页面布局" class="ml-[25px]"><svg class="h-[19px] w-5"><path fill="none" stroke="#777" d="M.5.500h18v18H.5zM4.500 3.500h10v12h-10zM7 6.500h5M7 9.500h5M7 12.500h5"/></svg></button>
  <button aria-label="分页预览" class="ml-[25px]"><svg class="h-[19px] w-5"><path fill="none" stroke="#777" d="M.5.500h18v18H.5zM6.500 0v10M12.500 0v10.500H0"/></svg></button>
  <button aria-label="缩小" class="ml-[18px]"><svg class="h-3 w-3"><path stroke="#666" stroke-width="3" d="M0 6h12"/></svg></button>
  <svg class="ml-1.5 h-3 w-[148px]"><path stroke="#ababab" stroke-width="2" d="M0 6h148M74 1v10"/></svg>
  <button aria-label="放大" class="ml-1"><svg class="h-3 w-3"><path stroke="#666" stroke-width="2" d="M0 6h12M6 0v12"/></svg></button>
  <span class="ml-3 w-[50px] text-right text-xl font-light text-[#999]">100%</span>
  <span class="absolute right-2 bottom-0 font-['Liberation_Sans',sans-serif] text-base leading-5 text-white [text-shadow:1px_1px_1px_#bbb]">https://blog.csdn.net/qq_26769591</span>
</footer>

<!-- Desktop taskbar -->
<div class="flex h-[11px] shrink-0 overflow-hidden bg-[#1f2531]">
  <div class="ml-[72px] w-[516px] border-t border-[#bababa] bg-[#f1f1f1]"></div>
  <div class="ml-[404px] w-[66px] bg-[#565962]"></div>
  <div class="ml-0.5 w-[5px] bg-[#45474f]"></div>
  <div class="mt-[3px] mr-[114px] ml-auto h-6 w-6 border-2 border-black bg-white text-center text-xl leading-[18px] font-bold text-black">M</div>
  <div class="mr-[105px] w-[50px] pt-1 text-lg leading-5 text-white">22:00</div>
  <div class="mr-[7px] w-px bg-[#777]"></div>
</div>

<script>
  const letters = 'ABCDEFGHIJKLMNOPQR'.split('');
  const content = {
    2: 1, 5: 2, 8: 3, 11: 4, 14: 5, 17: 6, 20: 7,
    6: 'Sidhant Gupta , Matthew S. Reynolds , Shwetak N. Patel, ElectriSense: single-point sensing using EMI for electrical event detection and classification in the home, Proceedings of the 12th ACM international conference on Ubiquitous computing',
    9: 'Paul C. Kocher, Timing Attacks on Implementations of Diffie-Hellman, RSA, DSS, and Other Systems, Proceedings of the 16th Annual International Cryptology Conference on Advances in Cryptology',
    12: 'Yan Michalevsky , Dan Boneh , Gabi Nakibly, Gyrophone: recognizing speech from gyroscope signals, Proceedings of the 23rd USENIX conference on Security Symposium, p.1053-1067, August 20',
    15: 'François Petitjean , Germain Forestier , Geoffrey I. Webb , Ann E. Nicholson , Yanping Chen , Eamonn Keogh, Dynamic Time Warping Averaging of Time Series Allows Faster and More Accurate Classification',
    18: "Cati Vaucelle , Hiroshi Ishii , Joseph A. Paradiso, Cost-effective wearable sensor to detect EMF, CHI '09 Extended Abstracts on Human Factors in Computing Systems, April 04-09, 2009, Boston, MA"
  };
  const cell = '<td class="border-r border-b border-[#d4d4d4]"></td>';

  document.getElementById('cols').innerHTML =
    '<th class="w-[43px] border-b border-[#9b9b9b] bg-[#e6e6e6] p-0"><svg class="ml-[19px] h-5 w-5"><path fill="#b1b1b1" d="M20 0v20H0z"/></svg></th>' +
    letters.map((l, i) => i === 0
      ? '<th scope="col" class="border-x border-b-2 border-x-[#ababab] border-b-[#217346] bg-[#d2d2d2] p-0 pt-px font-light text-[#217346]">A</th>'
      : `<th scope="col" class="border-b border-[#9b9b9b] bg-[#e6e6e6] bg-[linear-gradient(to_bottom,#d4d4d4,#9b9b9b)] bg-[length:1px_100%] bg-right bg-no-repeat p-0 pt-0.5 font-light">${l}</th>`
    ).join('');

  let html = '';
  for (let n = 1; n <= 20; n++) {
    const v = content[n];
    html += '<tr class="h-7">';
    html += n === 3
      ? '<th scope="row" class="border-r border-b border-[#9b9b9b] bg-[#d2d2d2] p-0 pt-0.5 font-light text-[#217346]">3</th>'
      : `<th scope="row" class="border-r border-[#9b9b9b] bg-[#e6e6e6] bg-[linear-gradient(to_right,#d4d4d4,#9b9b9b)] bg-[length:100%_1px] bg-bottom bg-no-repeat p-0 pt-0.5 font-light">${n}</th>`;
    if (n === 3) {
      html += '<td class="relative border-r border-b border-[#d4d4d4] p-0"><div class="absolute -inset-x-0.5 -inset-y-0.5 flex justify-center overflow-hidden border-2 border-[#217346] bg-white leading-[28px] whitespace-nowrap">s on PCs. Jo</div><i class="absolute -right-[3px] -bottom-[3px] h-[7px] w-[7px] border-t-2 border-l-2 border-white bg-[#217346]"></i></td>' + cell.repeat(17);
    } else if (typeof v === 'string') {
      html += `<td colspan="18" class="border-b border-[#d4d4d4] p-0 pt-0.5 pl-[3px]"><div class="whitespace-nowrap">${v}</div></td>`;
    } else {
      html += `<td class="border-r border-b border-[#d4d4d4] p-0 pt-0.5 pr-[3px] text-right">${v ?? ''}</td>` + cell.repeat(17);
    }
    html += '</tr>';
  }
  document.getElementById('rows').innerHTML = html;
</script>
</body>
</html>
